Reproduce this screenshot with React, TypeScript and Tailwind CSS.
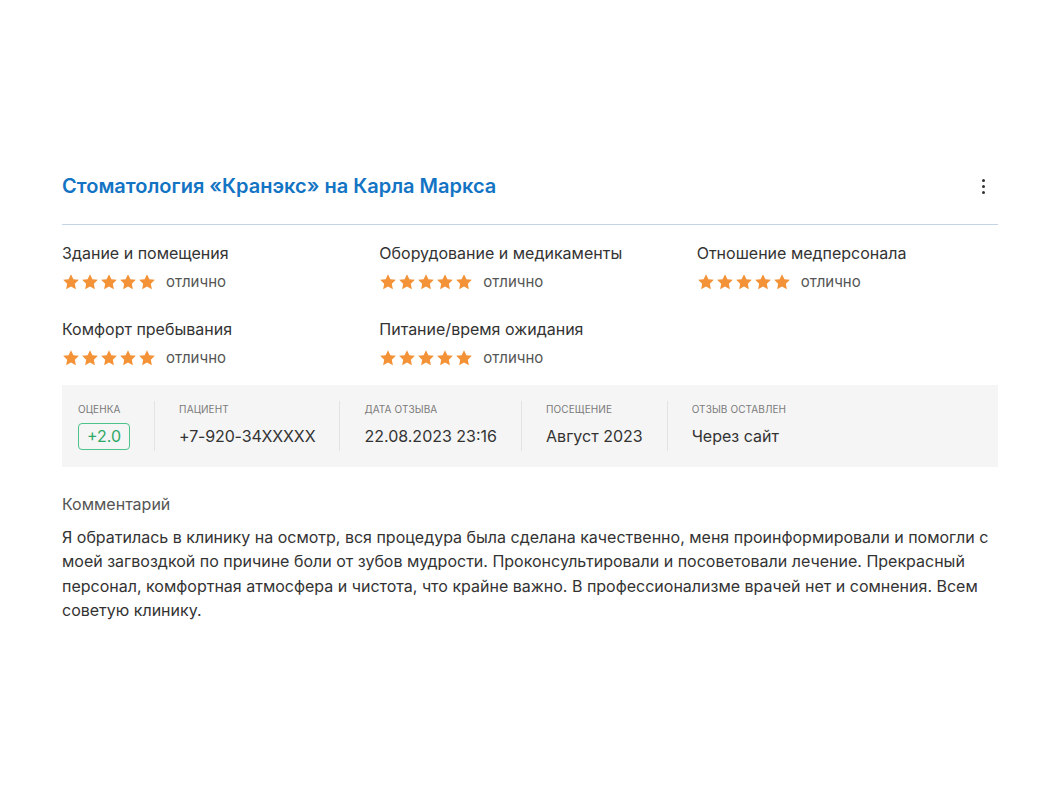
import React from "react";

const ratings = [
  "Здание и помещения",
  "Оборудование и медикаменты",
  "Отношение медперсонала",
  "Комфорт пребывания",
  "Питание/время ожидания",
];

function Star() {
  return (
    <svg viewBox="0 0 24 24" className="h-[18px] w-[18px]" fill="#f39237">
      <path d="M12 1.5l3.2 6.7 7.3.9-5.4 5.1 1.4 7.3L12 18l-6.5 3.5 1.4-7.3-5.4-5.1 7.3-.9z" />
    </svg>
  );
}

function RatingItem({ label }: { label: string }) {
  return (
    <div>
      <div className="text-[16px] leading-[22px] text-[#333]">{label}</div>
      <div className="mt-2 flex h-5 items-center">
        <div className="flex gap-[1px]">
          {[0, 1, 2, 3, 4].map((i) => (
            <Star key={i} />
          ))}
        </div>
        <span className="ml-[10px] text-[15px] text-[#555]">отлично</span>
      </div>
    </div>
  );
}

function Meta({
  label,
  children,
  first,
}: {
  label: string;
  children: React.ReactNode;
  first?: boolean;
}) {
  return (
    <div
      className={
        first
          ? "flex h-[50px] flex-col pr-6"
          : "flex h-[50px] flex-col border-l border-[#e3e3e3] px-6"
      }
    >
      <div className="h-4 text-[10px] uppercase leading-4 tracking-[0.01em] text-[#7a7a7a]">
        {label}
      </div>
      <div className="mt-[7px] text-[16px] leading-6 text-[#333]">{children}</div>
    </div>
  );
}

export default function App() {
  return (
    <div
      className="min-h-[790px] bg-white px-[62px] pt-[172px]"
      style={{ fontFamily: "Inter, 'Noto Sans', sans-serif" }}
    >
      <div className="flex h-7 items-center justify-between">
        <h1 className="text-[20px] font-semibold leading-7 text-[#1474c4]">
          Стоматология «Кранэкс» на Карла Маркса
        </h1>
        <button className="mr-[13px] flex flex-col gap-[3px]">
          <span className="h-[3px] w-[3px] rounded-full bg-[#333]" />
          <span className="h-[3px] w-[3px] rounded-full bg-[#333]" />
          <span className="h-[3px] w-[3px] rounded-full bg-[#333]" />
        </button>
      </div>

      <div className="mt-6 border-t border-[#c5d4e4]" />

      <div className="mt-[17px] grid grid-cols-3 gap-x-4 gap-y-[26px]">
        {ratings.map((r) => (
          <RatingItem key={r} label={r} />
        ))}
      </div>

      <div className="mt-[17px] flex bg-[#f5f5f5] py-4 pl-4">
        <Meta label="Оценка" first>
          <span className="-mt-px inline-block rounded-[4px] border border-[#4cc38a] px-2 text-[16px] leading-[25px] text-[#2fa866]">
            +2.0
          </span>
        </Meta>
        <Meta label="Пациент">
          <span className="tracking-[-0.15px]">+7-920-34XXXXX</span>
        </Meta>
        <Meta label="Дата отзыва">22.08.2023 23:16</Meta>
        <Meta label="Посещение">Август 2023</Meta>
        <Meta label="Отзыв оставлен">Через сайт</Meta>
      </div>

      <div className="mt-[26px] text-[16px] leading-[22px] text-[#555]">Комментарий</div>
      <p className="mt-[10px] text-[16px] leading-[24.4px] text-[#333]">
        Я обратилась в клинику на осмотр, вся процедура была сделана качественно, меня
        проинформировали и помогли с моей загвоздкой по причине боли от зубов мудрости.
        Проконсультировали и посоветовали лечение. Прекрасный персонал, комфортная
        атмосфера и чистота, что крайне важно. В профессионализме врачей нет и сомнения.
        Всем советую клинику.
      </p>
    </div>
  );
}
